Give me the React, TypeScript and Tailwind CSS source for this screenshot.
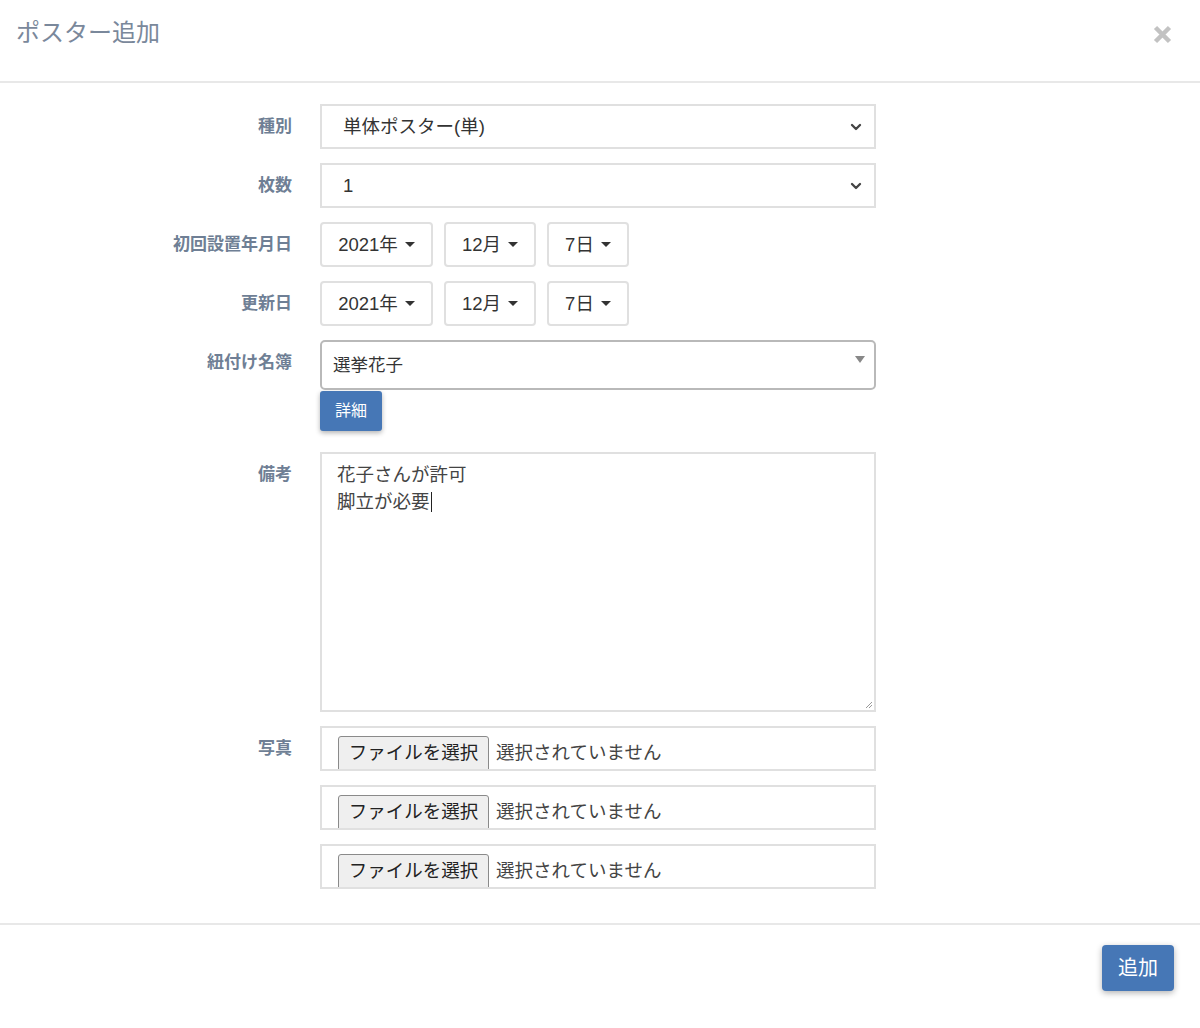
import { ChevronDown } from "lucide-react";

const jp = { fontFamily: '"Liberation Sans", "Noto Sans CJK JP", sans-serif' };

function Label({ text }: { text: string }) {
  return (
    <div className="w-[292px] shrink-0 pt-[11px] text-right text-[17px] leading-[24px] font-bold text-[#6f7f95]">
      {text}
    </div>
  );
}

function Caret() {
  return <span className="ml-[7px] inline-block border-x-[5px] border-t-[5px] border-x-transparent border-t-[#333]" />;
}

function DateButton({ text, w }: { text: string; w: string }) {
  return (
    <div className={`${w} flex h-[45px] items-center justify-center rounded-[4px] border-2 border-[#e0e0e0] bg-white text-[18.5px] text-[#333]`}>
      {text}
      <Caret />
    </div>
  );
}

function SelectBox({ value }: { value: string }) {
  return (
    <div className="flex h-[45px] w-[556px] items-center justify-between border-2 border-[#e0e0e0] bg-white pl-[21px] pr-[10px] text-[18.5px] text-[#333]">
      <span>{value}</span>
      <ChevronDown size={16} strokeWidth={3.5} className="text-[#444]" />
    </div>
  );
}

function FileBox() {
  return (
    <div className="flex h-[45px] w-[556px] items-start overflow-hidden border-2 border-[#e0e0e0] bg-white pl-[16px] pt-[8px]">
      <div className="flex h-[40px] w-[151px] shrink-0 items-start justify-center rounded-[3px] border border-[#8a8a8a] bg-[#efefef] pt-[4px] text-[18.5px] leading-[24px] text-[#222]">
        ファイルを選択
      </div>
      <span className="ml-[7px] pt-[5px] text-[18.5px] leading-[24px] text-[#444]">選択されていません</span>
    </div>
  );
}

export default function App() {
  return (
    <div className="min-h-[1028px] w-[1200px] bg-white" style={jp}>
      <div className="flex h-[83px] items-start justify-between border-b-2 border-[#e8e8e8] pl-[16px] pr-[28px] pt-[17px]">
        <h1 className="text-[24px] leading-[32px] font-normal text-[#7a889b]">ポスター追加</h1>
        <svg width="19" height="19" viewBox="0 0 19 19" className="mt-[8px]">
          <path d="M2.5 2.5 L16.5 16.5 M16.5 2.5 L2.5 16.5" stroke="#c2c2c2" strokeWidth="4.5" />
        </svg>
      </div>

      <div className="flex flex-col gap-[14px] pt-[21px] pb-[34px]">
        <div className="flex gap-[28px]">
          <Label text="種別" />
          <SelectBox value="単体ポスター(単)" />
        </div>
        <div className="flex gap-[28px]">
          <Label text="枚数" />
          <SelectBox value="1" />
        </div>
        <div className="flex gap-[28px]">
          <Label text="初回設置年月日" />
          <div className="flex gap-[11px]">
            <DateButton text="2021年" w="w-[113px]" />
            <DateButton text="12月" w="w-[92px]" />
            <DateButton text="7日" w="w-[82px]" />
          </div>
        </div>
        <div className="flex gap-[28px]">
          <Label text="更新日" />
          <div className="flex gap-[11px]">
            <DateButton text="2021年" w="w-[113px]" />
            <DateButton text="12月" w="w-[92px]" />
            <DateButton text="7日" w="w-[82px]" />
          </div>
        </div>
        <div className="flex gap-[28px]">
          <Label text="紐付け名簿" />
          <div className="flex flex-col">
            <div className="relative flex h-[50px] w-[556px] items-center rounded-[5px] border-2 border-[#b9b9b9] bg-white pl-[11px] pt-[1px] text-[17.5px] text-[#333]">
              選挙花子
              <span className="absolute right-[9px] top-[14px] inline-block border-x-[5.5px] border-t-[7px] border-x-transparent border-t-[#888]" />
            </div>
            <div className="mt-[1px] mb-[7px] flex h-[40px] w-[62px] items-center justify-center rounded-[3px] bg-[#4677b6] text-[16px] text-white shadow-[0_2px_5px_rgba(0,0,0,0.3)]">
              詳細
            </div>
          </div>
        </div>
        <div className="flex gap-[28px]">
          <Label text="備考" />
          <div className="relative h-[260px] w-[556px] border-2 border-[#e0e0e0] bg-white pl-[15px] pt-[7px] text-[18.5px] leading-[27px] text-[#444]">
            <div>花子さんが許可</div>
            <div className="flex items-center">
              脚立が必要
              <span className="ml-[1px] inline-block h-[20px] w-[1px] bg-[#222]" />
            </div>
            <svg width="8" height="8" viewBox="0 0 8 8" className="absolute bottom-[1px] right-[1px]">
              <path d="M7 1 L1 7 M7 4 L4 7" stroke="#999" strokeWidth="1" />
            </svg>
          </div>
        </div>
        <div className="flex gap-[28px]">
          <Label text="写真" />
          <FileBox />
        </div>
        <div className="flex gap-[28px]">
          <div className="w-[292px] shrink-0" />
          <FileBox />
        </div>
        <div className="flex gap-[28px]">
          <div className="w-[292px] shrink-0" />
          <FileBox />
        </div>
      </div>

      <div className="flex justify-end border-t-2 border-[#e8e8e8] pt-[20px] pr-[26px]">
        <div className="flex h-[46px] w-[72px] items-center justify-center rounded-[4px] bg-[#4677b6] text-[20px] text-white shadow-[0_2px_6px_rgba(0,0,0,0.3)]">
          追加
        </div>
      </div>
    </div>
  );
}
